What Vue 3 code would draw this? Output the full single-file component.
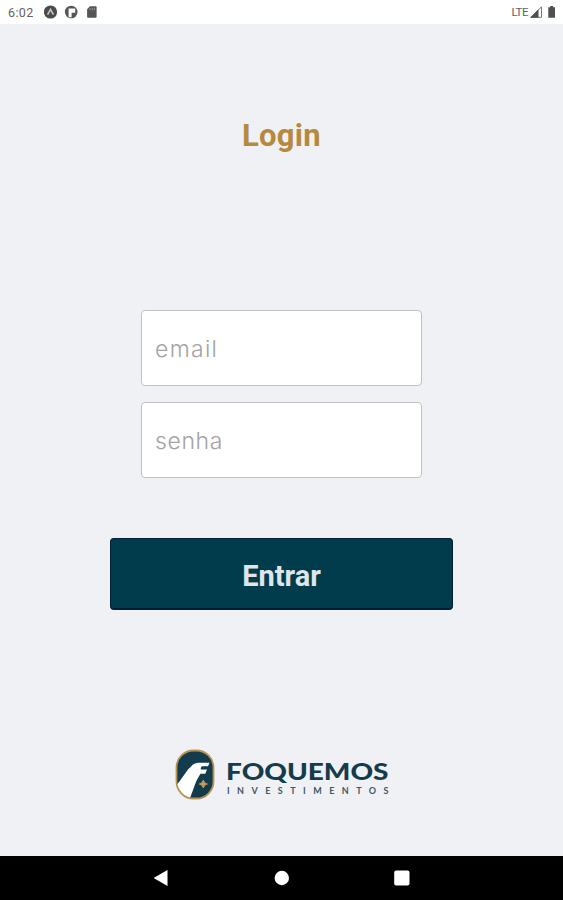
<template>
    <div class="screen">
        <header class="status-bar">
            <span class="clock">6:02</span>
            <svg class="status-icons" width="56" height="14" viewBox="0 0 56 14">
                <circle cx="6.5" cy="7" r="6.6" fill="#4b4b4b" />
                <path d="M3.6 9.6 6.5 4.4l2.900 5.200" fill="none" stroke="#c4c4c4" stroke-width="1.7" />
                <circle cx="27.2" cy="7" r="6.3" fill="#555" />
                <path d="M24.6 3.4h6.600v4.400h-3.600v4.500h-3z" fill="#fff" />
                <path d="M45.8 1.200h5.800q1 0 1 1v9.600q0 1-1 1h-7.500q-1 0-1-1V4.200z" fill="#555" />
                <path d="M46 2.800v2.400M48.200 2.800v2.400M50.400 2.800v2.400" stroke="#999" stroke-width="1" />
            </svg>
            <span class="network">LTE</span>
            <svg class="signal-icons" width="27" height="14" viewBox="0 0 27 14">
                <path d="M1 12.300 11.500 1.800v10.500z" fill="#fff" stroke="#777" stroke-width="1" />
                <path d="M0 12.800 8.500 4.300v8.500z" fill="#505050" />
                <path d="M20.200 1h3v1.200H25v10.600h-6.700V2.200h1.900z" fill="#505050" />
            </svg>
        </header>

        <main class="content">
            <h1 class="title">Login</h1>
            <form class="login-form" @submit.prevent>
                <input v-model="email" class="field field-email" type="text" placeholder="email" />
                <input v-model="senha" class="field field-senha" type="password" placeholder="senha" />
                <button class="submit" type="submit">Entrar</button>
            </form>
            <svg class="logo" width="216" height="52" viewBox="0 0 216 52">
                <defs>
                    <clipPath id="badge">
                        <rect x="2.5" y="1.5" width="37" height="48" rx="17" />
                    </clipPath>
                </defs>
                <rect x="2.5" y="1.5" width="37" height="48" rx="17" fill="#123b4b" />
                <path
                    clip-path="url(#badge)"
                    d="M0 39 5 33 14 20.500 19 15.600Q21.500 13.800 25 13.800H35.500L34 17.300H28Q26.700 17.500 26.700 20.500H33L31.300 24.800H26.500C24.500 28 22.500 31.500 21 35.500L15 52H0z"
                    fill="#fff"
                />
                <rect x="2.5" y="1.5" width="37" height="48" rx="17" fill="none" stroke="#b89253" stroke-width="1.8" />
                <path d="M29.300 31q.6 3.500 4 4-3.400.5-4 4-.6-3.500-4-4 3.400-.5 4-4z" fill="#c39a5d" stroke="#c39a5d" />
                <text class="brand" x="52" y="30.5" textLength="162.5" lengthAdjust="spacingAndGlyphs">FOQUEMOS</text>
                <text class="tagline" x="53" y="45" textLength="161.5">INVESTIMENTOS</text>
            </svg>
        </main>

        <nav class="nav-bar">
            <svg width="16" height="18" viewBox="0 0 16 18">
                <path d="M13.500 1v16L-.5 9z" fill="#fff" />
            </svg>
            <svg width="16" height="18" viewBox="0 0 16 18">
                <circle cx="7.8" cy="9" r="7.2" fill="#fff" />
            </svg>
            <svg width="16" height="18" viewBox="0 0 16 18">
                <rect x=".2" y="1.5" width="15.3" height="15" rx="2" fill="#fff" />
            </svg>
        </nav>
    </div>
</template>

<script setup>
import { ref } from 'vue'

const email = ref('')
const senha = ref('')
</script>

<style>
body {
    margin: 0;
}
</style>

<style scoped>
.screen {
    display: flex;
    flex-direction: column;
    height: 900px;
    background: #eff1f5;
    font-family: Roboto, sans-serif;
}

.status-bar {
    display: flex;
    align-items: center;
    box-sizing: border-box;
    height: 24px;
    padding: 0 6px 0 8px;
    background: #fff;
    color: #626262;
}

.clock {
    width: 36px;
    font-size: 12.5px;
    letter-spacing: 0.4px;
}

.network {
    margin-left: auto;
    font-size: 11.5px;
    letter-spacing: -0.5px;
}

.signal-icons {
    margin-left: 2px;
}

.content {
    display: flex;
    flex: 1;
    flex-direction: column;
    align-items: center;
}

.title {
    margin: 93px 0 0;
    color: #b58a3e;
    font-size: 31px;
    font-weight: 700;
    letter-spacing: 0.3px;
    line-height: 38px;
}

.login-form {
    display: flex;
    flex-direction: column;
    align-items: center;
    margin-top: 155px;
}

.field {
    box-sizing: border-box;
    width: 281px;
    height: 76px;
    padding: 2px 13px 0;
    border: 1px solid #bfc0c5;
    border-radius: 4px;
    background: #fff;
    color: #444;
    font-family: Inter, sans-serif;
    font-size: 23px;
    font-weight: 300;
    outline: none;
}

.field::placeholder {
    color: #a3a3a3;
    opacity: 1;
}

.field-email {
    letter-spacing: 1.3px;
}

.field-senha {
    margin-top: 16px;
    letter-spacing: 0.6px;
}

.submit {
    width: 343px;
    height: 72px;
    margin-top: 60px;
    padding: 5px 0 0;
    border: 1px solid #041e35;
    border-bottom-width: 2px;
    border-radius: 4px;
    background: #003c4b;
    color: #dfe5ea;
    font-family: Roboto, sans-serif;
    font-size: 29px;
    font-weight: 700;
}

.logo {
    margin-top: 139px;
}

.brand {
    fill: #163c4c;
    font-family: Lato, sans-serif;
    font-size: 22px;
    font-weight: 900;
}

.tagline {
    fill: #3c5966;
    font-family: Lato, sans-serif;
    font-size: 9px;
    font-weight: 700;
}

.nav-bar {
    display: flex;
    align-items: center;
    justify-content: center;
    gap: 104px;
    height: 44px;
    background: #000;
}
</style>
